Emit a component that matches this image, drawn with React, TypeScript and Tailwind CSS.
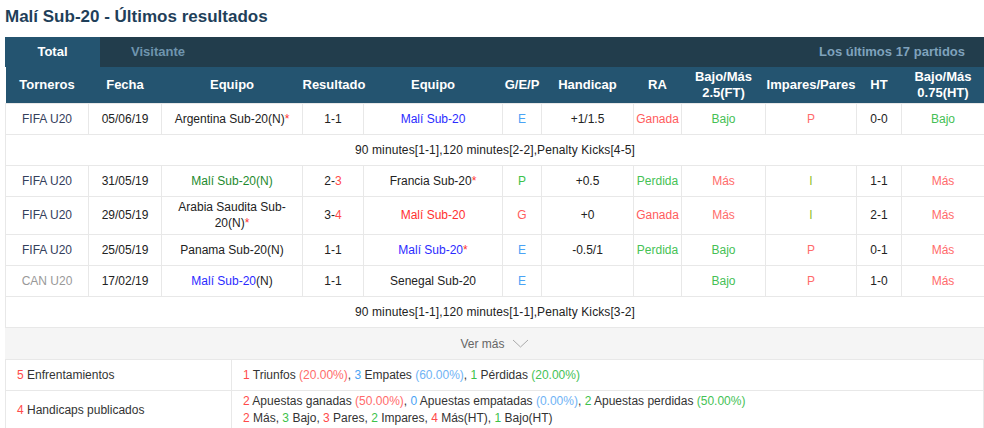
type Row = {
  liga: string;
  ligaGray?: boolean;
  fecha: string;
  local: React.ReactNode;
  res: React.ReactNode;
  visita: React.ReactNode;
  gep: React.ReactNode;
  hcp: string;
  ra: React.ReactNode;
  bm: React.ReactNode;
  ip: React.ReactNode;
  ht: string;
  bmht: React.ReactNode;
  tall?: boolean;
  note?: string;
};

const red = 'text-[#ff4a4a]';
const star = <span className="text-[#ff3333]">*</span>;
const E = <span className="text-[#4aa3f5]">E</span>;
const bajo = <span className="text-[#45bf55]">Bajo</span>;
const mas = <span className="text-[#ff6b6b]">Más</span>;
const P = <span className="text-[#ff6b6b]">P</span>;
const I = <span className="text-[#8fbf2f]">I</span>;
const ganada = <span className="text-[#ff5c5c]">Ganada</span>;
const perdida = <span className="text-[#45c255]">Perdida</span>;

const rows: Row[] = [
  {
    liga: 'FIFA U20', fecha: '05/06/19',
    local: <>Argentina Sub-20(N){star}</>, res: '1-1',
    visita: <span className="text-[#2b2bff]">Malí Sub-20</span>,
    gep: E, hcp: '+1/1.5', ra: ganada, bm: bajo, ip: P, ht: '0-0', bmht: bajo,
    note: '90 minutes[1-1],120 minutes[2-2],Penalty Kicks[4-5]',
  },
  {
    liga: 'FIFA U20', fecha: '31/05/19',
    local: <span className="text-[#1e8a2e]">Malí Sub-20(N)</span>, res: <>2-<span className={red}>3</span></>,
    visita: <>Francia Sub-20{star}</>,
    gep: <span className="text-[#3cc24a]">P</span>, hcp: '+0.5', ra: perdida, bm: mas, ip: I, ht: '1-1', bmht: mas,
  },
  {
    liga: 'FIFA U20', fecha: '29/05/19', tall: true,
    local: <>Arabia Saudita Sub-<br />20(N){star}</>, res: <>3-<span className={red}>4</span></>,
    visita: <span className="text-[#ff3030]">Malí Sub-20</span>,
    gep: <span className="text-[#ff5c5c]">G</span>, hcp: '+0', ra: ganada, bm: mas, ip: I, ht: '2-1', bmht: mas,
  },
  {
    liga: 'FIFA U20', fecha: '25/05/19',
    local: 'Panama Sub-20(N)', res: '1-1',
    visita: <span className="text-[#2b2bff]">Malí Sub-20{star}</span>,
    gep: E, hcp: '-0.5/1', ra: perdida, bm: bajo, ip: P, ht: '0-1', bmht: mas,
  },
  {
    liga: 'CAN U20', ligaGray: true, fecha: '17/02/19',
    local: <><span className="text-[#2b2bff]">Malí Sub-20</span>(N)</>, res: '1-1',
    visita: 'Senegal Sub-20',
    gep: E, hcp: '', ra: '', bm: bajo, ip: P, ht: '1-0', bmht: mas,
    note: '90 minutes[1-1],120 minutes[1-1],Penalty Kicks[3-2]',
  },
];

const heads = ['Torneros', 'Fecha', 'Equipo', 'Resultado', 'Equipo', 'G/E/P', 'Handicap', 'RA', 'Bajo/Más 2.5(FT)', 'Impares/Pares', 'HT', 'Bajo/Más 0.75(HT)'];
const widths = [83, 73, 141, 61, 139, 39, 92, 48, 84, 91, 45, 83];

const td = 'border border-[#e8e8e8] text-center px-0 leading-[16px]';

export default function App() {
  return (
    <div className="w-[984px] h-[428px] overflow-hidden bg-white font-['Liberation_Sans',Arial,sans-serif] text-[12px] text-[#222]">
      <div className="h-[37px] pl-[5px] pt-[4px] text-[17px] font-bold text-[#1f3f5a]">
        Malí Sub-20 - Últimos resultados
      </div>
      <div className="ml-[5px]">
        {/* tabs */}
        <div className="flex h-[30px] items-center bg-[#223d4c] text-[13px] font-bold">
          <div className="flex h-full w-[95px] items-center justify-center bg-[#245470] text-white">Total</div>
          <div className="pl-[31px] text-[#6f95ae]">Visitante</div>
          <div className="ml-auto pr-[19px] text-[#7fa2bc]">Los últimos 17 partidos</div>
        </div>

        <table className="w-[979px] table-fixed border-collapse">
          <colgroup>
            {widths.map((w, i) => <col key={i} style={{ width: w }} />)}
          </colgroup>
          <thead>
            <tr className="h-[36px] bg-[#245470] text-[13px] font-bold text-white">
              {heads.map((h, i) => (
                <th key={i} className="px-0 leading-[16px] font-bold">
                  {h.startsWith('Bajo') ? <>Bajo/Más<br />{h.slice(9)}</> : h}
                </th>
              ))}
            </tr>
          </thead>
          <tbody>
            {rows.map((r, i) => (
              <>
                <tr key={'r' + i} className={r.tall ? 'h-[38px]' : 'h-[31px]'}>
                  <td className={`${td} ${r.ligaGray ? 'text-[#999]' : 'text-[#34405c]'}`}>{r.liga}</td>
                  <td className={td}>{r.fecha}</td>
                  <td className={td}>{r.local}</td>
                  <td className={td}>{r.res}</td>
                  <td className={td}>{r.visita}</td>
                  <td className={td}>{r.gep}</td>
                  <td className={td}>{r.hcp}</td>
                  <td className={td}>{r.ra}</td>
                  <td className={td}>{r.bm}</td>
                  <td className={td}>{r.ip}</td>
                  <td className={td}>{r.ht}</td>
                  <td className={td}>{r.bmht}</td>
                </tr>
                {r.note && (
                  <tr key={'n' + i} className="h-[31px]">
                    <td colSpan={12} className={`${td} tracking-[0.1px]`}>{r.note}</td>
                  </tr>
                )}
              </>
            ))}
          </tbody>
        </table>

        <div className="flex h-[31px] items-center justify-center gap-[7px] bg-[#f5f5f5] pt-[1px] text-[#666]">
          Ver más
          <svg width="17" height="9" viewBox="0 0 17 9" fill="none" stroke="#aaa" strokeWidth="1">
            <polyline points="1,1 8.5,8 16,1" />
          </svg>
        </div>

        <table className="w-[979px] table-fixed border-collapse text-[#333]">
          <colgroup>
            <col style={{ width: 226 }} />
            <col />
          </colgroup>
          <tbody>
            <tr className="h-[31px]">
              <td className="border border-[#e8e8e8] pl-[11px]"><span className="text-[#ff4a4a]">5</span> Enfrentamientos</td>
              <td className="border border-[#e8e8e8] pl-[11px]">
                <span className="text-[#ff4a4a]">1</span> Triunfos <span className="text-[#ff6b6b]">(20.00%)</span>,{' '}
                <span className="text-[#4aa3f5]">3</span> Empates <span className="text-[#6fb3f5]">(60.00%)</span>,{' '}
                <span className="text-[#3cc24a]">1</span> Pérdidas <span className="text-[#45c255]">(20.00%)</span>
              </td>
            </tr>
            <tr className="h-[40px]">
              <td className="border border-[#e8e8e8] pl-[11px]"><span className="text-[#ff4a4a]">4</span> Handicaps publicados</td>
              <td className="border border-[#e8e8e8] pl-[11px] leading-[17px]">
                <span className="text-[#ff4a4a]">2</span> Apuestas ganadas <span className="text-[#ff6b6b]">(50.00%)</span>,{' '}
                <span className="text-[#4aa3f5]">0</span> Apuestas empatadas <span className="text-[#6fb3f5]">(0.00%)</span>,{' '}
                <span className="text-[#3cc24a]">2</span> Apuestas perdidas <span className="text-[#45c255]">(50.00%)</span>
                <br />
                <span className="text-[#ff4a4a]">2</span> Más, <span className="text-[#3cc24a]">3</span> Bajo,{' '}
                <span className="text-[#ff4a4a]">3</span> Pares, <span className="text-[#3cc24a]">2</span> Impares,{' '}
                <span className="text-[#ff4a4a]">4</span> Más(HT), <span className="text-[#3cc24a]">1</span> Bajo(HT)
              </td>
            </tr>
          </tbody>
        </table>
      </div>
    </div>
  );
}
